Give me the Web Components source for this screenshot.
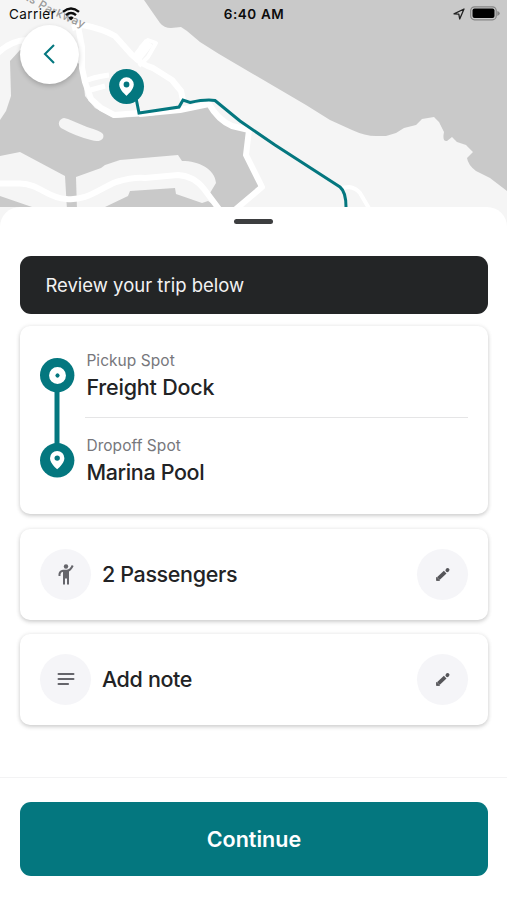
<!DOCTYPE html>
<html lang="en">
<head>
<meta charset="utf-8">
<title>Review trip</title>
<style>
html,body{margin:0;height:100%;background:#fff}
body{font-family:Inter,"Liberation Sans",sans-serif;color:#222325}
</style>
</head>
<body>
<trip-screen></trip-screen>
<script>
const define = (name, html) => customElements.define(name, class extends HTMLElement {
  constructor() {
    super();
    const t = document.createElement('template');
    t.innerHTML = html;
    this.attachShadow({mode: 'open'}).append(t.content.cloneNode(true));
  }
});

define('trip-map', `
<style>:host{display:block;width:507px;height:240px}svg{display:block}</style>
<svg width="507" height="240" viewBox="0 0 507 240">
  <rect width="507" height="240" fill="#f5f5f5"/>
  <g fill="#c9c9c9">
    <path d="M144 0L153 13L160 23Q164 28 171 28L181 27L187 31L200 42L219 54L253 74L306 105L330 120L352 130Q365 136 376 136H386L396 133L404 128L416 125L422 119L434 117L439 122L444 132Q442 142 447 141L452 137L457 142L466 145L473 152L467 158Q468 165 476 171L490 178L507 191V0Z"/>
    <path d="M20 50L10 61L11 96L6 111L0 120V156L20 152L65 176L67 210H77L76 177L101 168L105 165L120 160L178 155L182 161C199 161 215 169 216 183L210 193L222 210H234L259 186L244 155L247 131L232 125L222 117L213 107L208 105L150 116L114 118L95 108L85 96L82 66L60 50Z"/>
    <path d="M105 207L128 196L130 191L175 188L176 194L202 203L208 201L222 210H105ZM0 196L32 207H0Z"/>
  </g>
  <path d="M64 118C59 119 57 124 61 128Q75 136 91 140C100 143 105 139 103 134Q101 131 87 127L68 119Z" fill="#f5f5f5"/>
  <g fill="none" stroke="#fff" stroke-width="6" stroke-linejoin="round">
    <path d="M-2 53Q10 41 26 40M72 28L83 25Q103 29 115 36L132 55Q142 65 153 68L172 80L181 91L183 100"/>
    <path d="M78 26L82 47L82 68L85 82L91 99L101 108L114 115L139 113"/>
    <path d="M135 60L149 42" stroke-width="10"/>
    <path d="M140 48L148 40L156 43L148 57L139 66" stroke-width="4"/>
    <path d="M83 82Q93 77 109 75M87 91L105 86" stroke-width="5"/>
    <path d="M0 183.500H20C40 184 47 198 66 199C87 201 97 190 116 182Q133 177 145 178L178 175Q194 176 204 189L219 209"/>
    <path d="M139 114L180 110L209 104Q218 120 232 126L249 130L246 155L262 187L236 209"/>
    <path d="M341 188L349 187Q356 188 360 193L370 210" stroke-width="4"/>
  </g>
  <path d="M136 98L139 113L179 107L183 100L190 102.500Q206 99 215 100.500L240 121L275 145L340 187Q346 192 346 207" fill="none" stroke="#04777f" stroke-width="3"/>
  <circle cx="126.500" cy="86.500" r="17.500" fill="#04777f"/>
  <path fill-rule="evenodd" d="M126.500 77.300a7.300 7.300 0 0 0-7.300 7.300c0 5.300 7.300 11.300 7.300 11.300s7.300-6 7.300-11.300a7.300 7.300 0 0 0-7.300-7.300Zm0 4.300a2.900 2.900 0 1 1 0 5.800a2.900 2.900 0 0 1 0-5.800Z" fill="#fff"/>
  <path id="road" d="M14 -7L48 13L92 32" fill="none"/>
  <text font-size="11.500" letter-spacing=".5" font-weight="500" fill="#999"><textPath href="#road">orts Parkway</textPath></text>
</svg>`);

define('status-bar', `
<style>
:host{display:grid;grid-template-columns:1fr auto 1fr;align-items:center;height:27px;padding:0 7px 0 9px;box-sizing:border-box;color:#0c0c0c;font-size:13.500px}
div{display:flex;align-items:center}
.c{letter-spacing:.4px}.l{gap:6px}.r{justify-content:flex-end;gap:5px}b{font-weight:600;font-size:13.500px;letter-spacing:.6px;margin-left:-1px}
svg{display:block}
</style>
<div class="l"><span class="c">Carrier</span>
<svg width="18" height="14" viewBox="0 0 18 14" fill="none" stroke="#0c0c0c" stroke-width="2.400"><path d="M1 4.800Q9-2 17 4.800M4 8.200Q9 3.900 14 8.200"/><path d="M6.300 10.700Q9 8.300 11.700 10.700L9 13.600Z" fill="#0c0c0c" stroke="none"/></svg></div>
<b>6:40 AM</b>
<div class="r"><svg width="12" height="12" viewBox="0 0 12 12" fill="none" stroke="#222" stroke-width="1.300" stroke-linejoin="round"><path d="M1 5.800L11 1L6.700 11L5.800 6.200Z"/></svg>
<svg width="30" height="15" viewBox="0 0 30 15"><rect x=".7" y=".8" width="25.500" height="13" rx="3.800" fill="none" stroke="#858585" stroke-width="1.200"/><rect x="2.500" y="2.600" width="22" height="9.400" rx="2" fill="#000"/><path d="M27.300 5Q29.800 6 29.800 7.400T27.300 10Z" fill="#858585"/></svg></div>`);

define('back-button', `
<style>:host{display:grid;place-items:center;width:59px;height:59px;border-radius:50%;background:#fff;box-shadow:0 2px 5px #0003}svg{display:block}</style>
<svg width="59" height="59" viewBox="0 0 59 59"><path d="M34 20L25 29L34 38" fill="none" stroke="#04777f" stroke-width="2.100"/></svg>`);

define('info-banner', `
<style>:host{display:flex;align-items:center;height:58.500px;padding:0 25px;box-sizing:border-box;background:#232526;color:#f2f2f2;border-radius:11px;font-size:18.500px}</style><slot></slot>`);

define('sheet-card', `
<style>:host{display:block;box-sizing:border-box;background:#fff;border-radius:10px;box-shadow:0 2px 4px #0000002b,0 0 5px #00000012}</style><slot></slot>`);

define('trip-stop', `
<style>
:host{display:block}
.k{font-size:15.500px;line-height:20px;color:#77777c;letter-spacing:var(--lk,0)}
.v{font-size:21.500px;line-height:28px;margin:2px 0 1px;font-weight:450;letter-spacing:var(--lv,0)}
.v,.k{white-space:nowrap}
</style><div class="k"><slot name="label"></slot></div><div class="v"><slot></slot></div>`);

define('trip-route', `
<style>
:host{display:grid;grid-template-columns:34px 1fr;column-gap:12.500px;padding:25px 20px 0 19.500px;height:188px;box-sizing:border-box}
.rail{display:block;margin-top:7px}
.stops{display:flex;flex-direction:column}
hr{border:0;height:1px;background:#e5e5e6;width:calc(100% + 1px);margin:14.500px 0 18px -1px}
</style>
<svg class="rail" width="35" height="120" viewBox="0 0 35 120"><path d="M17 17V102" stroke="#04777f" stroke-width="5"/><g fill="#04777f"><circle cx="17.200" cy="17.200" r="17.200"/><circle cx="17.200" cy="102.300" r="17.200"/></g><circle cx="17.500" cy="17.500" r="5.200" fill="none" stroke="#fff" stroke-width="6.500"/><circle cx="17.500" cy="17.500" r="1.900" fill="#04777f"/>
<path fill-rule="evenodd" d="M17.200 93a7.200 7.200 0 0 0-7.200 7.200c0 5.300 7.200 11 7.200 11s7.200-5.700 7.200-11a7.200 7.200 0 0 0-7.200-7.200Zm0 4.400a2.700 2.700 0 1 1 0 5.400a2.700 2.700 0 0 1 0-5.400Z" fill="#fff"/></svg>
<div class="stops"><trip-stop style="--lk:.05px;--lv:-.2px"><span slot="label">Pickup Spot</span>Freight Dock</trip-stop><hr><trip-stop style="--lk:.05px;--lv:-.35px"><span slot="label">Dropoff Spot</span>Marina Pool</trip-stop></div>`);

define('option-row', `
<style>
:host{display:flex;align-items:center;height:90.500px;padding:0 19.500px 0 20px;box-sizing:border-box;font-size:21.500px;font-weight:450;letter-spacing:-.35px}
.i{width:51px;height:51px;border-radius:50%;background:#f5f5f8;display:grid;place-items:center;flex:none}
.t{flex:1;margin-left:10.500px}svg{display:block}
</style>
<div class="i"><slot name="icon"></slot></div><div class="t"><slot></slot></div>
<div class="i"><svg width="16" height="16" viewBox="0 0 16 16" stroke="#555559" stroke-width="3.700"><path d="M3.300 12.700L10.200 6.100"/><path d="M1.500 11.400L4.500 14.500H1.500Z" fill="#555559" stroke-width=".8" stroke-linejoin="round"/><path d="M12.300 4.200L12.600 3.900" stroke-linecap="round"/></svg></div>`);

define('primary-button', `
<style>:host{display:block}button{display:block;width:100%;height:73.500px;border:0;border-radius:11px;background:#04777f;color:#fff;font:600 21.500px Inter,"Liberation Sans",sans-serif;padding:0}</style><button><slot></slot></button>`);

define('trip-screen', `
<style>
:host{display:flex;flex-direction:column;position:relative;width:507px;height:900px;overflow:hidden;background:#fff}
trip-map{flex:none}
status-bar{position:absolute;top:0;left:0;width:507px}
back-button{position:absolute;top:25px;left:20px}
main{position:relative;flex:1;margin-top:-33px;background:#fff;border-radius:20px 20px 0 0;display:flex;flex-direction:column}
.handle{width:38.500px;height:5px;border-radius:3px;background:#3d3e40;margin:11.500px auto 0}
.body{padding:32px 19.500px 0 20.400px;display:flex;flex-direction:column}
.a{margin-top:12px}.b{margin-top:15px}.c{margin-top:14.500px}
footer{margin-top:auto;height:123.500px;border-top:1.500px solid #f3f3f4;box-sizing:border-box;padding:24.500px 19.500px 0 20.400px}
</style>
<trip-map></trip-map>
<main>
<div class="handle"></div>
<div class="body">
<info-banner>Review your trip below</info-banner>
<sheet-card class="a"><trip-route></trip-route></sheet-card>
<sheet-card class="b"><option-row>
<svg slot="icon" width="16" height="21" viewBox="0 0 16 21" fill="none" stroke="#65656b"><circle cx="8" cy="2.500" r="2.200" fill="#65656b" stroke="none"/><path d="M1.500 12V10Q2 7.200 5 6.800H9Q12.500 6.500 14.700 1.500" stroke-width="2"/><path d="M5 6H11V20.500H9V14.500H7V20.500H5Z" fill="#65656b" stroke="none"/></svg>2 Passengers</option-row></sheet-card>
<sheet-card class="c"><option-row>
<svg slot="icon" width="18" height="14" viewBox="0 0 18 14" fill="none" stroke="#65656b" stroke-width="2.200" stroke-linecap="round"><path d="M1.600 2H16.400M1.600 7H16.400M1.600 12H11"/></svg>Add note</option-row></sheet-card>
</div>
<footer><primary-button>Continue</primary-button></footer>
</main>
<status-bar></status-bar>
<back-button></back-button>`);
</script>
</body>
</html>
